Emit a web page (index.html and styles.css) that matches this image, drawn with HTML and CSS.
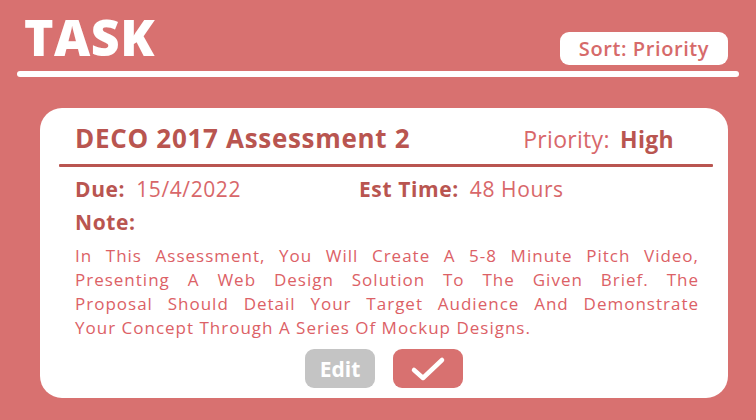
FILE: index.html
```html
<!DOCTYPE html>
<html>
<head>
<meta charset="utf-8">
<link rel="stylesheet" href="styles.css">
</head>
<body>
<div class="page">
  <header class="top">
    <h1 class="brand">TASK</h1>
    <button class="sort">Sort: Priority</button>
  </header>
  <div class="rule"></div>
  <section class="card">
    <div class="card-head">
      <h2 class="title">DECO 2017 Assessment 2</h2>
      <div class="prio"><span class="lbl-light">Priority:</span> <span class="lbl-dark">High</span></div>
    </div>
    <div class="divider"></div>
    <div class="meta">
      <div class="due"><span class="lbl">Due:</span> <span class="val">15/4/2022</span></div>
      <div class="est"><span class="lbl">Est Time:</span> <span class="val">48 Hours</span></div>
    </div>
    <div class="note-lbl">Note:</div>
    <p class="note"><span class="ln">In This Assessment, You Will Create A 5-8 Minute Pitch Video,</span> <span class="ln">Presenting A Web Design Solution To The Given Brief. The</span> <span class="ln">Proposal Should Detail Your Target Audience And Demonstrate</span> <span class="ln last">Your Concept Through A Series Of Mockup Designs.</span></p>
    <div class="actions">
      <button class="btn edit">Edit</button>
      <button class="btn done"><svg width="36" height="26" viewBox="0 0 36 26"><path d="M4 14 L13 22 L32 4" fill="none" stroke="#fff" stroke-width="4.5" stroke-linecap="round" stroke-linejoin="round"/></svg></button>
    </div>
  </section>
</div>
</body>
</html>
```
FILE: styles.css
```css
* { box-sizing: border-box; }
html, body { margin: 0; padding: 0; }
body {
  background: #d87170;
  width: 756px;
  height: 420px;
  overflow: hidden;
  font-family: "Open Sans", "Noto Sans", sans-serif;
}
.page { padding-top: 10px; }
.top {
  display: flex;
  justify-content: space-between;
  align-items: flex-end;
  padding: 0 28px 0 24px;
  height: 54px;
}
.brand {
  margin: 0;
  color: #fff;
  font-family: "Open Sans", sans-serif;
  font-weight: 800;
  font-size: 50px;
  line-height: 54px;
  letter-spacing: 0.5px;
}
.sort {
  margin-bottom: -1px;
  width: 168px;
  height: 33px;
  border: none;
  border-radius: 9px;
  background: #fff;
  color: #d66a6a;
  font-family: "Open Sans", sans-serif;
  font-weight: 600;
  font-size: 20px;
  letter-spacing: 0.6px;
  padding: 0;
}
.rule {
  margin: 7px 17px 0 17px;
  height: 6px;
  border-radius: 3px;
  background: #fff;
}
.card {
  margin: 31px 0 0 40px;
  width: 688px;
  height: 290px;
  background: #fff;
  border-radius: 22px;
  padding: 12px 15px 0 19px;
}
.card-head {
  display: flex;
  justify-content: space-between;
  align-items: baseline;
  padding: 0 39px 0 16px;
  height: 44px;
}
.title {
  margin: 0;
  color: #b95550;
  font-weight: 700;
  font-size: 26px;
  line-height: 36px;
  letter-spacing: 0.7px;
}
.prio { font-size: 23px; letter-spacing: 0.3px; }
.lbl-light { color: #d8676a; font-weight: 400; }
.lbl-dark { color: #b95550; font-weight: 700; margin-left: 4px; }
.divider {
  height: 3px;
  background: #b95550;
  border-radius: 1px;
}
.meta {
  display: flex;
  padding-left: 16px;
  margin-top: 8px;
  font-size: 21px;
  line-height: 28px;
  letter-spacing: 0.6px;
}
.due { width: 284px; }
.lbl { color: #b95550; font-weight: 700; }
.val { color: #d8676a; margin-left: 5px; }
.note-lbl {
  padding-left: 16px;
  margin-top: 5px;
  color: #b95550;
  font-weight: 700;
  font-size: 21px;
  line-height: 28px;
  letter-spacing: 0.6px;
}
.note {
  margin: 8px 0 0 0;
  padding: 0 14px 0 16px;
  color: #dc6166;
  font-size: 17px;
  line-height: 24px;
  letter-spacing: 1px;
}
.ln {
  display: block;
  text-align: justify;
  text-align-last: justify;
}
.ln.last { text-align-last: left; }
.actions {
  display: flex;
  justify-content: center;
  gap: 18px;
  margin-top: 9px;
  padding-right: 4px;
}
.btn {
  width: 70px;
  height: 39px;
  border: none;
  border-radius: 9px;
  padding: 0;
  display: flex;
  align-items: center;
  justify-content: center;
}
.edit {
  background: #c4c4c4;
  color: #fff;
  font-family: "Open Sans", sans-serif;
  font-weight: 700;
  font-size: 21px;
}
.done { background: #d87170; }
```
